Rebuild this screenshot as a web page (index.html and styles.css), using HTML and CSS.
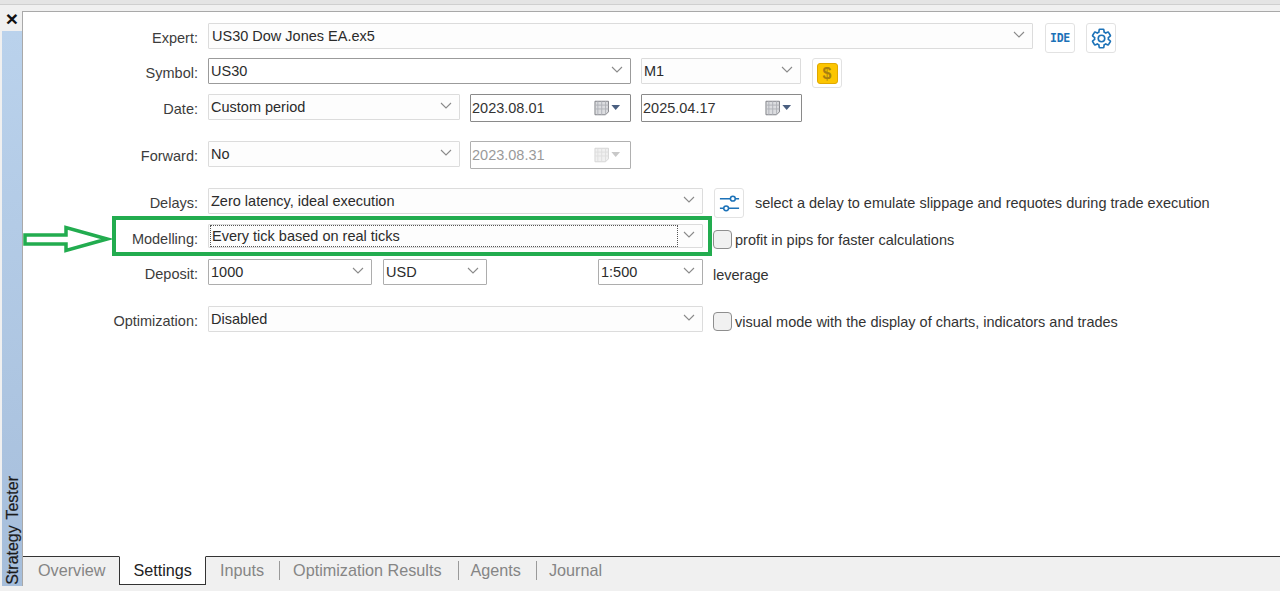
FILE: index.html
```html
<!DOCTYPE html>
<html lang="en">
<head>
<meta charset="utf-8">
<title>Strategy Tester</title>
<link rel="stylesheet" href="styles.css">
</head>
<body>
<div class="topbar"></div>
<div class="app">
  <aside class="rail">
    <div class="close">×</div>
    <div class="caption"><span>Strategy Tester</span></div>
  </aside>
  <main class="panel">
    <form class="form">
      <div class="row">
        <label class="label">Expert:</label>
        <div class="combo w-expert"><span>US30 Dow Jones EA.ex5</span><svg class="chev" viewBox="0 0 12 7"><path d="M1 1l5 5 5-5"/></svg></div>
        <button type="button" class="btn btn-first ide">IDE</button>
        <button type="button" class="btn btn-next"><svg class="icon" viewBox="0 0 24 24"><path d="M19.14 12.94c.04-.3.06-.61.06-.94 0-.32-.02-.64-.07-.94l2.03-1.58c.18-.14.23-.41.12-.61l-1.92-3.32c-.12-.22-.37-.29-.59-.22l-2.39.96c-.5-.38-1.03-.7-1.62-.94l-.36-2.54c-.04-.24-.24-.41-.48-.41h-3.84c-.24 0-.43.17-.47.41l-.36 2.54c-.59.24-1.13.57-1.62.94l-2.39-.96c-.22-.08-.47 0-.59.22L2.74 8.87c-.12.21-.08.47.12.61l2.03 1.58c-.05.3-.09.63-.09.94s.02.64.07.94l-2.03 1.58c-.18.14-.23.41-.12.61l1.92 3.32c.12.22.37.29.59.22l2.39-.96c.5.38 1.03.7 1.62.94l.36 2.54c.05.24.24.41.48.41h3.84c.24 0 .44-.17.47-.41l.36-2.54c.59-.24 1.13-.56 1.62-.94l2.39.96c.22.08.47 0 .59-.22l1.92-3.32c.12-.22.07-.47-.12-.61l-2.01-1.58z" fill="none" stroke="#1c72b8" stroke-width="1.700"/><circle cx="12" cy="12" r="3.400" fill="none" stroke="#1c72b8" stroke-width="1.700"/></svg></button>
      </div>
      <div class="row">
        <label class="label">Symbol:</label>
        <div class="combo strong w-symbol"><span>US30</span><svg class="chev" viewBox="0 0 12 7"><path d="M1 1l5 5 5-5"/></svg></div>
        <div class="combo w-date"><span>M1</span><svg class="chev" viewBox="0 0 12 7"><path d="M1 1l5 5 5-5"/></svg></div>
        <button type="button" class="btn btn-coin"><span class="coin">$</span></button>
      </div>
      <div class="row">
        <label class="label">Date:</label>
        <div class="combo w-period"><span>Custom period</span><svg class="chev" viewBox="0 0 12 7"><path d="M1 1l5 5 5-5"/></svg></div>
        <div class="datebox"><span>2023.08.01</span><svg class="cal" viewBox="0 0 28 16"><path d="M1 1h14v11l-3 3H1z" fill="#dcdde0" stroke="#7f8085"/><path d="M4 1v14M8 1v14M12 1v14M1 5h14M1 9h14" stroke="#b0b2b8" fill="none"/><path d="M18 5h9l-4.500 5z" fill="#4a5f80"/></svg></div>
        <div class="datebox"><span>2025.04.17</span><svg class="cal" viewBox="0 0 28 16"><path d="M1 1h14v11l-3 3H1z" fill="#dcdde0" stroke="#7f8085"/><path d="M4 1v14M8 1v14M12 1v14M1 5h14M1 9h14" stroke="#b0b2b8" fill="none"/><path d="M18 5h9l-4.500 5z" fill="#4a5f80"/></svg></div>
      </div>
      <div class="row">
        <label class="label">Forward:</label>
        <div class="combo w-period"><span>No</span><svg class="chev" viewBox="0 0 12 7"><path d="M1 1l5 5 5-5"/></svg></div>
        <div class="datebox disabled"><span>2023.08.31</span><svg class="cal" viewBox="0 0 28 16"><path d="M1 1h14v11l-3 3H1z" fill="#f0f0f0" stroke="#d4d4d4"/><path d="M4 1v14M8 1v14M12 1v14M1 5h14M1 9h14" stroke="#dedede" fill="none"/><path d="M18 5h9l-4.500 5z" fill="#c8c8c8"/></svg></div>
      </div>
      <div class="row">
        <label class="label">Delays:</label>
        <div class="combo w-wide"><span>Zero latency, ideal execution</span><svg class="chev" viewBox="0 0 12 7"><path d="M1 1l5 5 5-5"/></svg></div>
        <button type="button" class="btn btn-side"><svg class="icon" viewBox="0 0 24 24"><path d="M2 7h11M18 7h4M2 17h4M11 17h11" fill="none" stroke="#1c72b8" stroke-width="1.600"/><circle cx="15.500" cy="7" r="2.500" fill="none" stroke="#1c72b8" stroke-width="1.600"/><circle cx="8.500" cy="17" r="2.500" fill="none" stroke="#1c72b8" stroke-width="1.600"/></svg></button>
        <span class="note note-side">select a delay to emulate slippage and requotes during trade execution</span>
      </div>
      <div class="row">
        <label class="label">Modelling:</label>
        <div class="combo w-wide focus"><span class="focus-text">Every tick based on real ticks</span><svg class="chev" viewBox="0 0 12 7"><path d="M1 1l5 5 5-5"/></svg></div>
        <span class="check check-low"></span>
        <span class="note note-check">profit in pips for faster calculations</span>
      </div>
      <div class="row">
        <label class="label">Deposit:</label>
        <div class="combo mid w-deposit"><span>1000</span><svg class="chev" viewBox="0 0 12 7"><path d="M1 1l5 5 5-5"/></svg></div>
        <div class="combo mid w-currency"><span>USD</span><svg class="chev" viewBox="0 0 12 7"><path d="M1 1l5 5 5-5"/></svg></div>
        <div class="combo mid w-leverage"><span>1:500</span><svg class="chev" viewBox="0 0 12 7"><path d="M1 1l5 5 5-5"/></svg></div>
        <span class="note note-lev">leverage</span>
      </div>
      <div class="row">
        <label class="label">Optimization:</label>
        <div class="combo w-wide"><span>Disabled</span><svg class="chev" viewBox="0 0 12 7"><path d="M1 1l5 5 5-5"/></svg></div>
        <span class="check check-low"></span>
        <span class="note note-check">visual mode with the display of charts, indicators and trades</span>
      </div>
    </form>
    <nav class="tabs">
      <a class="tab first">Overview</a>
      <a class="tab active">Settings</a>
      <a class="tab plain">Inputs</a>
      <a class="tab sep opt">Optimization Results</a>
      <a class="tab sep agents">Agents</a>
      <a class="tab sep journal">Journal</a>
    </nav>
  </main>
  <div class="highlight"></div>
  <svg class="arrow" viewBox="0 0 90 30"><path d="M3 11H44V3.500L85 15 44 26.500V20H3z" fill="#fff" stroke="#22ac4f" stroke-width="3.500"/></svg>
</div>
</body>
</html>
```
FILE: styles.css
```css
* { box-sizing: border-box; }
html, body { margin: 0; height: 100%; overflow: hidden; }
body { background: #f0f0f0; font-family: "Liberation Sans", Arial, sans-serif; font-size: 14.500px; color: #2b2b2b; width: 1280px; height: 591px; display: flex; flex-direction: column; }
.topbar { height: 5px; background: #e4e4e4; border-bottom: 1px solid #cfcfcf; flex: none; }
.app { position: relative; flex: 1; display: flex; padding: 6px 0 5px 2px; min-height: 0; background: #f0f0f0; }
.rail { width: 20px; flex: none; display: flex; flex-direction: column; }
.close { height: 20px; font-size: 21px; font-weight: 700; color: #111; text-align: center; line-height: 16px; }
.caption { flex: 1; background: linear-gradient(#bad2ec, #a6bedb); display: flex; justify-content: center; align-items: flex-end; }
.caption span { writing-mode: vertical-rl; transform: rotate(180deg); font-size: 16px; word-spacing: 1.500px; line-height: 19px; color: #1b1b1b; padding-top: 1px; -webkit-text-stroke: .2px #1b1b1b; }
.panel { flex: 1; display: flex; flex-direction: column; background: #fff; border-top: 1px solid #a9a9a9; border-left: 1px solid #a9a9a9; }
.form { flex: 1; display: grid; grid-template-rows: 35px 36px 47px 47px 36px 35px 47px auto; padding-top: 11px; }
.row { display: flex; align-items: flex-start; }
.label { width: 175px; text-align: right; margin-right: 10px; line-height: 24px; padding-top: 3px; color: #3c3c3c; flex: none; }
.combo { height: 26px; border: 1px solid #dcdcdc; border-radius: 1px; background: #fdfdfd; display: flex; align-items: center; justify-content: space-between; padding: 0 7px 0 2px; flex: none; line-height: 22px; }
.combo.strong { border-color: #9b9b9b; background: #fff; }
.combo.mid { border-color: #adadad; background: #fff; }
.chev { width: 12px; height: 7px; flex: none; position: relative; top: -2px; }
.chev path { fill: none; stroke: #8a8a8a; stroke-width: 1.100; }
.w-expert { width: 825px; padding-left: 3px; }
.w-symbol { width: 423px; margin-right: 10px; }
.w-date { width: 160px; }
.w-period { width: 252px; margin-right: 10px; }
.w-wide { width: 495px; }
.w-deposit { width: 164px; margin-right: 11px; }
.w-currency { width: 104px; margin-right: 111px; }
.w-leverage { width: 105px; }
.row:nth-child(6) .combo { height: 24px; }
.focus-text { outline: 1px dotted #555; padding: 1px 4px 0 1px; width: 466px; line-height: 19px; }
.datebox { width: 161px; height: 28px; border: 1px solid #8a8a8a; border-radius: 1px; background: #fff; display: flex; align-items: center; justify-content: space-between; padding: 0 9px 0 1px; margin-right: 10px; flex: none; color: #333; }
.datebox.disabled { border-color: #b0b0b0; color: #9a9a9a; }
.cal { width: 27px; height: 16px; }
.btn { width: 30px; height: 30px; border: 1px solid #e2e2e2; border-radius: 3px; background: #fff; padding: 0; display: flex; align-items: center; justify-content: center; flex: none; }
.btn-first { margin-left: 12px; }
.btn-next { margin-left: 11px; }
.btn-coin { margin-left: 11px; }
.btn-side { margin-left: 11px; }
.ide { font-family: "DejaVu Sans Mono", monospace; font-weight: 700; font-size: 11.500px; color: #1c72b8; letter-spacing: -.3px; }
.icon { width: 23px; height: 23px; }
.coin { width: 21px; height: 21px; border-radius: 3px; background: #fcc500; border: 1px solid #e0a800; color: #a87f10; font-weight: 700; font-size: 16px; line-height: 19px; text-align: center; }
.note { color: #333; line-height: 22px; flex: none; }
.note-side { margin-left: 11px; margin-top: 4px; }
.note-check { margin-left: 3px; margin-top: 5px; }
.note-lev { margin-left: 10px; margin-top: 5px; }
.check { width: 19px; height: 19px; border: 1px solid #8e8e8e; border-radius: 4px; background: #f1f1f1; margin-left: 10px; margin-top: 6px; flex: none; }
.tabs { height: 30px; flex: none; display: flex; background: #f0f0f0; border-top: 1px solid #333; font-size: 16.200px; color: #858585; align-items: stretch; }
.tab { padding: 0 14px; line-height: 27px; position: relative; }
.tab.first { padding-left: 15px; }
.tab.active { background: #fff; color: #222; border-left: 1px solid #333; border-right: 1px solid #333; border-bottom: 1px solid #333; margin-top: -1px; border-top: 1px solid #fff; height: 29px; padding: 0 13px; }
.tab.plain { padding-right: 15px; }
.tab.opt { padding-right: 16px; }
.tab.agents { padding: 0 15px 0 13px; }
.tab.journal { padding-left: 13px; }
.tab.sep::before { content: ""; position: absolute; left: 0; top: 4px; bottom: 6px; width: 1px; background: #9a9a9a; }
.highlight { position: absolute; left: 112px; top: 211px; width: 600px; height: 40px; border: 4px solid #22ac4f; pointer-events: none; }
.arrow { position: absolute; left: 22px; top: 219px; width: 90px; height: 30px; }
```
